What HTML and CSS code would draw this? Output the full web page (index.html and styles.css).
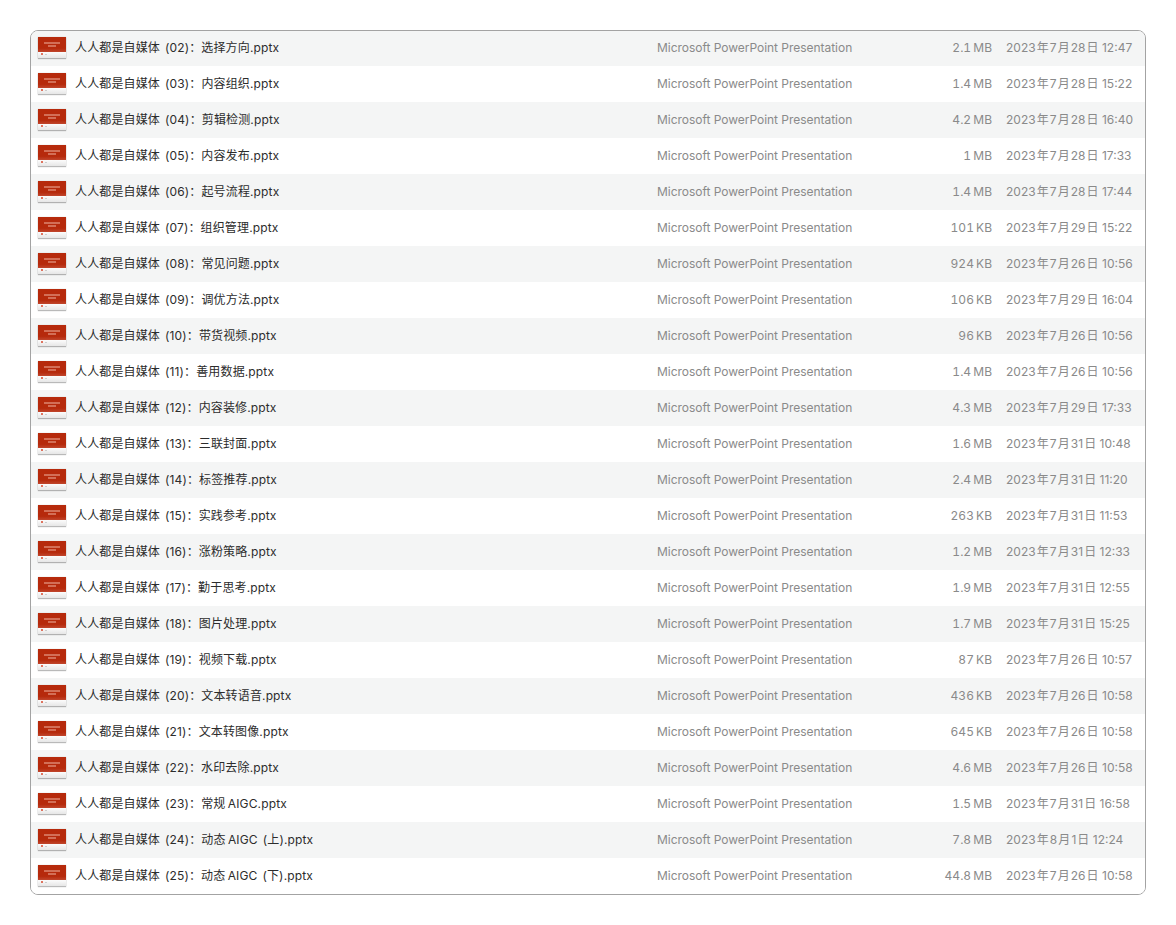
FILE: index.html
```html
<!DOCTYPE html>
<html lang="zh-CN">
<head>
    <meta charset="UTF-8">
    <meta name="viewport" content="width=device-width, initial-scale=1.0">
    <title>人人都是自媒体</title>
    <link rel="stylesheet" href="styles.css">
</head>
<body>
    <div class="file-list">
        <div class="row"><div class="thumb"><i></i><i></i><b></b></div><span class="name">人人都是自媒体 (02)：选择方向.pptx</span><span class="kind">Microsoft PowerPoint Presentation</span><span class="size">2.1&thinsp;MB</span><span class="date">2023&hairsp;年&hairsp;7&hairsp;月&hairsp;28&hairsp;日 12:47</span></div>
        <div class="row"><div class="thumb"><i></i><i></i><b></b></div><span class="name">人人都是自媒体 (03)：内容组织.pptx</span><span class="kind">Microsoft PowerPoint Presentation</span><span class="size">1.4&thinsp;MB</span><span class="date">2023&hairsp;年&hairsp;7&hairsp;月&hairsp;28&hairsp;日 15:22</span></div>
        <div class="row"><div class="thumb"><i></i><i></i><b></b></div><span class="name">人人都是自媒体 (04)：剪辑检测.pptx</span><span class="kind">Microsoft PowerPoint Presentation</span><span class="size">4.2&thinsp;MB</span><span class="date">2023&hairsp;年&hairsp;7&hairsp;月&hairsp;28&hairsp;日 16:40</span></div>
        <div class="row"><div class="thumb"><i></i><i></i><b></b></div><span class="name">人人都是自媒体 (05)：内容发布.pptx</span><span class="kind">Microsoft PowerPoint Presentation</span><span class="size">1&thinsp;MB</span><span class="date">2023&hairsp;年&hairsp;7&hairsp;月&hairsp;28&hairsp;日 17:33</span></div>
        <div class="row"><div class="thumb"><i></i><i></i><b></b></div><span class="name">人人都是自媒体 (06)：起号流程.pptx</span><span class="kind">Microsoft PowerPoint Presentation</span><span class="size">1.4&thinsp;MB</span><span class="date">2023&hairsp;年&hairsp;7&hairsp;月&hairsp;28&hairsp;日 17:44</span></div>
        <div class="row"><div class="thumb"><i></i><i></i><b></b></div><span class="name">人人都是自媒体 (07)：组织管理.pptx</span><span class="kind">Microsoft PowerPoint Presentation</span><span class="size">101&thinsp;KB</span><span class="date">2023&hairsp;年&hairsp;7&hairsp;月&hairsp;29&hairsp;日 15:22</span></div>
        <div class="row"><div class="thumb"><i></i><i></i><b></b></div><span class="name">人人都是自媒体 (08)：常见问题.pptx</span><span class="kind">Microsoft PowerPoint Presentation</span><span class="size">924&thinsp;KB</span><span class="date">2023&hairsp;年&hairsp;7&hairsp;月&hairsp;26&hairsp;日 10:56</span></div>
        <div class="row"><div class="thumb"><i></i><i></i><b></b></div><span class="name">人人都是自媒体 (09)：调优方法.pptx</span><span class="kind">Microsoft PowerPoint Presentation</span><span class="size">106&thinsp;KB</span><span class="date">2023&hairsp;年&hairsp;7&hairsp;月&hairsp;29&hairsp;日 16:04</span></div>
        <div class="row"><div class="thumb"><i></i><i></i><b></b></div><span class="name">人人都是自媒体 (10)：带货视频.pptx</span><span class="kind">Microsoft PowerPoint Presentation</span><span class="size">96&thinsp;KB</span><span class="date">2023&hairsp;年&hairsp;7&hairsp;月&hairsp;26&hairsp;日 10:56</span></div>
        <div class="row"><div class="thumb"><i></i><i></i><b></b></div><span class="name">人人都是自媒体 (11)：善用数据.pptx</span><span class="kind">Microsoft PowerPoint Presentation</span><span class="size">1.4&thinsp;MB</span><span class="date">2023&hairsp;年&hairsp;7&hairsp;月&hairsp;26&hairsp;日 10:56</span></div>
        <div class="row"><div class="thumb"><i></i><i></i><b></b></div><span class="name">人人都是自媒体 (12)：内容装修.pptx</span><span class="kind">Microsoft PowerPoint Presentation</span><span class="size">4.3&thinsp;MB</span><span class="date">2023&hairsp;年&hairsp;7&hairsp;月&hairsp;29&hairsp;日 17:33</span></div>
        <div class="row"><div class="thumb"><i></i><i></i><b></b></div><span class="name">人人都是自媒体 (13)：三联封面.pptx</span><span class="kind">Microsoft PowerPoint Presentation</span><span class="size">1.6&thinsp;MB</span><span class="date">2023&hairsp;年&hairsp;7&hairsp;月&hairsp;31&hairsp;日 10:48</span></div>
        <div class="row"><div class="thumb"><i></i><i></i><b></b></div><span class="name">人人都是自媒体 (14)：标签推荐.pptx</span><span class="kind">Microsoft PowerPoint Presentation</span><span class="size">2.4&thinsp;MB</span><span class="date">2023&hairsp;年&hairsp;7&hairsp;月&hairsp;31&hairsp;日 11:20</span></div>
        <div class="row"><div class="thumb"><i></i><i></i><b></b></div><span class="name">人人都是自媒体 (15)：实践参考.pptx</span><span class="kind">Microsoft PowerPoint Presentation</span><span class="size">263&thinsp;KB</span><span class="date">2023&hairsp;年&hairsp;7&hairsp;月&hairsp;31&hairsp;日 11:53</span></div>
        <div class="row"><div class="thumb"><i></i><i></i><b></b></div><span class="name">人人都是自媒体 (16)：涨粉策略.pptx</span><span class="kind">Microsoft PowerPoint Presentation</span><span class="size">1.2&thinsp;MB</span><span class="date">2023&hairsp;年&hairsp;7&hairsp;月&hairsp;31&hairsp;日 12:33</span></div>
        <div class="row"><div class="thumb"><i></i><i></i><b></b></div><span class="name">人人都是自媒体 (17)：勤于思考.pptx</span><span class="kind">Microsoft PowerPoint Presentation</span><span class="size">1.9&thinsp;MB</span><span class="date">2023&hairsp;年&hairsp;7&hairsp;月&hairsp;31&hairsp;日 12:55</span></div>
        <div class="row"><div class="thumb"><i></i><i></i><b></b></div><span class="name">人人都是自媒体 (18)：图片处理.pptx</span><span class="kind">Microsoft PowerPoint Presentation</span><span class="size">1.7&thinsp;MB</span><span class="date">2023&hairsp;年&hairsp;7&hairsp;月&hairsp;31&hairsp;日 15:25</span></div>
        <div class="row"><div class="thumb"><i></i><i></i><b></b></div><span class="name">人人都是自媒体 (19)：视频下载.pptx</span><span class="kind">Microsoft PowerPoint Presentation</span><span class="size">87&thinsp;KB</span><span class="date">2023&hairsp;年&hairsp;7&hairsp;月&hairsp;26&hairsp;日 10:57</span></div>
        <div class="row"><div class="thumb"><i></i><i></i><b></b></div><span class="name">人人都是自媒体 (20)：文本转语音.pptx</span><span class="kind">Microsoft PowerPoint Presentation</span><span class="size">436&thinsp;KB</span><span class="date">2023&hairsp;年&hairsp;7&hairsp;月&hairsp;26&hairsp;日 10:58</span></div>
        <div class="row"><div class="thumb"><i></i><i></i><b></b></div><span class="name">人人都是自媒体 (21)：文本转图像.pptx</span><span class="kind">Microsoft PowerPoint Presentation</span><span class="size">645&thinsp;KB</span><span class="date">2023&hairsp;年&hairsp;7&hairsp;月&hairsp;26&hairsp;日 10:58</span></div>
        <div class="row"><div class="thumb"><i></i><i></i><b></b></div><span class="name">人人都是自媒体 (22)：水印去除.pptx</span><span class="kind">Microsoft PowerPoint Presentation</span><span class="size">4.6&thinsp;MB</span><span class="date">2023&hairsp;年&hairsp;7&hairsp;月&hairsp;26&hairsp;日 10:58</span></div>
        <div class="row"><div class="thumb"><i></i><i></i><b></b></div><span class="name">人人都是自媒体 (23)：常规&thinsp;AIGC.pptx</span><span class="kind">Microsoft PowerPoint Presentation</span><span class="size">1.5&thinsp;MB</span><span class="date">2023&hairsp;年&hairsp;7&hairsp;月&hairsp;31&hairsp;日 16:58</span></div>
        <div class="row"><div class="thumb"><i></i><i></i><b></b></div><span class="name">人人都是自媒体 (24)：动态&thinsp;AIGC (上).pptx</span><span class="kind">Microsoft PowerPoint Presentation</span><span class="size">7.8&thinsp;MB</span><span class="date">2023&hairsp;年&hairsp;8&hairsp;月&hairsp;1&hairsp;日 12:24</span></div>
        <div class="row"><div class="thumb"><i></i><i></i><b></b></div><span class="name">人人都是自媒体 (25)：动态&thinsp;AIGC (下).pptx</span><span class="kind">Microsoft PowerPoint Presentation</span><span class="size">44.8&thinsp;MB</span><span class="date">2023&hairsp;年&hairsp;7&hairsp;月&hairsp;26&hairsp;日 10:58</span></div>
    </div>
</body>
</html>
```

FILE: styles.css
```css
* {
    margin: 0;
    padding: 0;
    box-sizing: border-box;
}

body {
    background: #fff;
    font-family: 'Inter', 'Noto Sans CJK SC', sans-serif;
    font-size: 12px;
    line-height: 16px;
    padding: 30px;
}

.file-list {
    border: 1px solid #a3a3a3;
    border-radius: 8px;
    overflow: hidden;
    width: 1116px;
    height: 865px;
}

.row {
    display: flex;
    align-items: center;
    height: 36px;
    padding-left: 7px;
    background: #fff;
}

.row:first-child {
    margin-top: -1px;
}

.row:nth-child(odd) {
    background: #f4f5f5;
}

.thumb {
    position: relative;
    width: 28px;
    height: 21px;
    flex: none;
    margin-right: 9px;
    margin-bottom: 2px;
    background: linear-gradient(#fdfdfd 70%, #e6e6e6);
    box-shadow: 0 1px 1px rgba(0, 0, 0, 0.25), 0 0 1px rgba(0, 0, 0, 0.2);
}

/* red title block, with its two tiny lines of text */
.thumb::before {
    content: '';
    position: absolute;
    top: 0;
    left: 0;
    right: 0;
    height: 15px;
    background: linear-gradient(#b62a0c 75%, #c0462c);
}

.thumb i {
    position: absolute;
    top: 5px;
    left: 6px;
    width: 16px;
    height: 2px;
    background: rgba(255, 215, 200, 0.4);
    filter: blur(0.4px);
}

.thumb i + i {
    top: 8px;
    left: 10px;
    width: 8px;
}

.thumb b {
    position: absolute;
    top: 16px;
    left: 3px;
    width: 2px;
    height: 2px;
    border-radius: 50%;
    background: #d8482c;
}

.thumb b::after {
    content: '';
    position: absolute;
    top: 1px;
    left: 4px;
    width: 2px;
    height: 1px;
    background: #ccc;
}

.name {
    width: 582px;
    color: #2c2c2c;
    white-space: nowrap;
    letter-spacing: 0.14px;
    word-spacing: 1.5px;
}

.kind {
    width: 260px;
    color: #8a8a8a;
    white-space: nowrap;
    letter-spacing: -0.03px;
}

.size {
    width: 75px;
    text-align: right;
    color: #8a8a8a;
    white-space: nowrap;
    font-variant-numeric: tabular-nums;
}

.date {
    margin-left: 14px;
    color: #8a8a8a;
    white-space: nowrap;
}
```
